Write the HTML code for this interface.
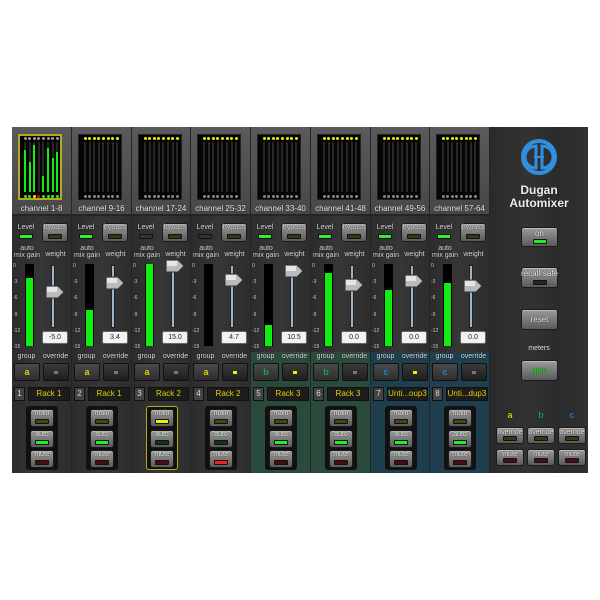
<!DOCTYPE html>
<html><head><meta charset="utf-8"><style>
*{margin:0;padding:0;box-sizing:border-box}
body{width:600px;height:600px;background:#fff;position:relative;overflow:hidden;font-family:"Liberation Sans",sans-serif}
.a{position:absolute}
.t{position:absolute;color:#ddd;font-size:7px;text-align:center;white-space:nowrap;text-shadow:0 0 1px #000}
.btn{position:absolute;border-radius:3px;background:linear-gradient(#9a9a9a,#5a5a5a);border:1px solid #1a1a1a;box-shadow:inset 0 1px 0 #bbb}
.led{position:absolute;border:1px solid #111;border-radius:1px}
</style></head><body>
<div class="a" style="left:12px;top:127px;width:576px;height:346px;background:#252525"></div>
<div class="a" style="left:490px;top:127px;width:98px;height:346px;background:linear-gradient(90deg,#2a2a2a,#333 40%,#2b2b2b 70%,#313131)"></div>
<div id="s"></div>
<svg class="a" style="left:520px;top:138px" width="38" height="38" viewBox="0 0 38 38">
<circle cx="19" cy="19" r="16" fill="none" stroke="#2f8fe0" stroke-width="4"/>
<path d="M16 8 A11 11 0 0 0 16 30 Z M22 8 A11 11 0 0 1 22 30 Z" fill="none" stroke="#2f8fe0" stroke-width="3"/>
<line x1="14" y1="19" x2="24" y2="19" stroke="#2f8fe0" stroke-width="2"/>
</svg>
<div class="t" style="left:490px;width:98px;top:183px;font-size:12px;font-weight:bold;color:#eee">Dugan</div>
<div class="t" style="left:490px;width:98px;top:196px;font-size:12px;font-weight:bold;color:#eee">Automixer</div>
<div id="r"></div>
<script>
var S='',x0=12,w=59.75;
var vals=['-5.0','3.4','15.0','4.7','10.5','0.0','0.0','0.0'];
var grp=['a','a','a','a','b','b','c','c'];
var gc={a:'#e0d000',b:'#2a9a50',c:'#2a80d0'};
var names=['Rack 1','Rack 1','Rack 2','Rack 2','Rack 3','Rack 3','Unti...oup3','Unti...dup3'];
var meter=[278,310,264,999,325,273,290,283];
var fad=[292,283,266,280,271,285,281,286];
var lvl=[1,1,0,0,1,1,1,1];
var ovr=[0,0,0,1,1,0,1,0];
var tint=['','','','','#2a4a3c','#2a4a3c','#1f3f4f','#1f3f4f'];
var auto=[1,1,0,0,1,1,1,1],man=[0,0,1,0,0,0,0,0],mute=[0,0,0,1,0,0,0,0];
for(var i=0;i<8;i++){
 var L=x0+i*w,l=Math.round(L),W=Math.round(L+w)-l-1;
 S+='<div class="a" style="left:'+l+'px;top:127px;width:'+W+'px;height:87px;background:linear-gradient(#5a5a5a,#474747)"></div>';
 S+='<div class="a" style="left:'+l+'px;top:216px;width:'+W+'px;height:257px;background:linear-gradient(90deg,#2c2c2c,#363636 50%,#2d2d2d)"></div>';
 if(tint[i])S+='<div class="a" style="left:'+l+'px;top:352px;width:'+W+'px;height:121px;background:'+tint[i]+'"></div>';
 var bx=l+6,bw=44;
 S+='<div class="a" style="left:'+bx+'px;top:134px;width:'+bw+'px;height:66px;background:#050505;'+(i==0?'border:2px solid #b8a820':'border:1px solid #222')+'"></div>';
 for(var k=0;k<8;k++){var cx=bx+6+k*4.6;
  S+='<div class="a" style="left:'+cx+'px;top:142px;width:2px;height:50px;background:#262626"></div>';
  S+='<div class="a" style="left:'+(cx-0.5)+'px;top:137px;width:3px;height:3px;border-radius:2px;background:'+(i==0?'#999':'#ee0')+'"></div>';
  var dc='#888';if(i==0)dc=(k==3?'#e00':(k==2?'#ee0':'#2e2'));
  S+='<div class="a" style="left:'+(cx-0.5)+'px;top:195px;width:3px;height:3px;border-radius:2px;background:'+dc+'"></div>';
 }
 if(i==0){var hs=[150,162,145,0,176,148,158,152];for(k=0;k<8;k++)if(hs[k])S+='<div class="a" style="left:'+(bx+6+k*4.6)+'px;top:'+hs[k]+'px;width:2px;height:'+(192-hs[k])+'px;background:#1e1"></div>';}
 S+='<div class="t" style="left:'+l+'px;width:'+W+'px;top:204px;font-size:8px;color:#eee">channel '+(i*8+1)+'-'+(i*8+8)+'</div>';
 S+='<div class="t" style="left:'+(l+4)+'px;width:20px;top:224px">Level</div>';
 S+='<div class="led" style="left:'+(l+7)+'px;top:234px;width:14px;height:5px;background:'+(lvl[i]?'#3e3':'#333')+'"></div>';
 S+='<div class="btn" style="left:'+(l+30)+'px;top:223px;width:26px;height:19px"></div><div class="t" style="left:'+(l+30)+'px;width:26px;top:224px">bypass</div>';
 S+='<div class="led" style="left:'+(l+36)+'px;top:234px;width:14px;height:5px;background:#3a3610"></div>';
 S+='<div class="t" style="left:'+l+'px;width:30px;top:245px">auto</div><div class="t" style="left:'+l+'px;width:30px;top:252px">mix gain</div><div class="t" style="left:'+(l+30)+'px;width:27px;top:251px">weight</div>';
 var sc=['0','-3','-6','-9','-12','-15'];
 for(k=0;k<6;k++)S+='<div class="t" style="left:'+(l+1)+'px;width:10px;top:'+(263+k*16.2)+'px;font-size:5px;text-align:left">'+sc[k]+'</div>';
 S+='<div class="a" style="left:'+(l+13)+'px;top:264px;width:9px;height:82px;background:#000"></div>';
 if(meter[i]<346)S+='<div class="a" style="left:'+(l+14)+'px;top:'+meter[i]+'px;width:7px;height:'+(346-meter[i])+'px;background:#1e1"></div>';
 S+='<div class="a" style="left:'+(l+39)+'px;top:265px;width:4px;height:63px;background:linear-gradient(90deg,#6a8ab0,#cde,#6a8ab0);border:1px solid #222"></div>';
 S+='<svg class="a" style="left:'+(l+33)+'px;top:'+(fad[i]-7)+'px" width="20" height="14"><path d="M1 1H13L19 7L13 13H1Z" fill="#bbb" stroke="#333"/><rect x="2" y="2" width="10" height="5" fill="#e6e6e6"/></svg>';
 S+='<div class="a" style="left:'+(l+30)+'px;top:331px;width:26px;height:13px;background:#f2f2f2;border:1px solid #666;border-radius:2px;font-size:7px;text-align:center;line-height:11px;color:#222">'+vals[i]+'</div>';
 S+='<div class="t" style="left:'+l+'px;width:29px;top:353px">group</div><div class="t" style="left:'+(l+29)+'px;width:29px;top:353px">override</div>';
 S+='<div class="a" style="left:'+(l+2)+'px;top:363px;width:26px;height:18px;background:linear-gradient(#4a4a4a,#2e2e2e);border:1px solid #111;border-radius:2px;color:'+gc[grp[i]]+';font-size:9px;text-align:center;line-height:16px;font-weight:bold">'+grp[i]+'</div>';
 S+='<div class="a" style="left:'+(l+31)+'px;top:363px;width:26px;height:18px;background:linear-gradient(#3a3a3a,#1e1e1e);border:1px solid #111;border-radius:2px"></div><div class="a" style="left:'+(l+42)+'px;top:371px;width:4px;height:3px;background:'+(ovr[i]?'#ee0':'#777')+'"></div>';
 S+='<div class="a" style="left:'+(l+2)+'px;top:387px;width:11px;height:14px;background:#444;border:1px solid #111;color:#ddd;font-size:8px;text-align:center;line-height:12px">'+(i+1)+'</div>';
 S+='<div class="a" style="left:'+(l+16)+'px;top:387px;width:'+(W-17)+'px;height:14px;background:#1c1c1c;border:1px solid #111;color:#e0d000;font-size:8px;text-align:center;line-height:12px;white-space:nowrap;overflow:hidden">'+names[i]+'</div>';
 S+='<div class="a" style="left:'+(l+14)+'px;top:406px;width:32px;height:64px;background:#111;border-radius:3px;'+(i==2?'border:1px solid #b8a820':'')+'"></div>';
 var bl=['main','auto','mute'],on=[man[i],auto[i],mute[i]],onc=['#ee0','#2e2','#e22'],ofc=['#4a4410','#0d3a10','#4a0c0c'];
 for(k=0;k<3;k++){var y=409+k*20.5;
  S+='<div class="btn" style="left:'+(l+18)+'px;top:'+y+'px;width:24px;height:18px"></div><div class="t" style="left:'+(l+18)+'px;width:24px;top:'+(y+1)+'px;color:#eee">'+bl[k]+'</div>';
  S+='<div class="led" style="left:'+(l+23)+'px;top:'+(y+10)+'px;width:14px;height:5px;background:'+(on[k]?onc[k]:ofc[k])+'"></div>';}
}
document.getElementById('s').innerHTML=S;
var R='';
function B(x,y,w,h,txt,led,tc,fs){R+='<div class="btn" style="left:'+x+'px;top:'+y+'px;width:'+w+'px;height:'+h+'px"></div><div class="t" style="left:'+x+'px;width:'+w+'px;top:'+(y+(led?2:6))+'px;font-size:'+(fs||7)+'px;color:'+(tc||'#eee')+'">'+txt+'</div>';if(led)R+='<div class="led" style="left:'+(x+w/2-7)+'px;top:'+(y+h-8)+'px;width:14px;height:5px;background:'+led+'"></div>';}
B(521,227,37,20,'on','#2e2','',8);B(521,267,37,21,'recall-safe','#1a2a30','',8);B(521,309,37,21,'reset','','',8);
R+='<div class="t" style="left:490px;width:98px;top:345px;color:#eee">meters</div>';
B(521,360,37,21,'gain','','#2e2',8);
var ab=['a','b','c'],ac=['#e0d000','#2a9a50','#2a80d0'];
for(var j=0;j<3;j++){var x=496+j*31;R+='<div class="t" style="left:'+x+'px;width:28px;top:410px;font-size:9px;font-weight:bold;color:'+ac[j]+'">'+ab[j]+'</div>';
B(x,427,28,17,'override','#3a3610');B(x,449,28,17,'mute','#4a0c0c');}
document.getElementById('r').innerHTML=R;
</script>
</body></html>
